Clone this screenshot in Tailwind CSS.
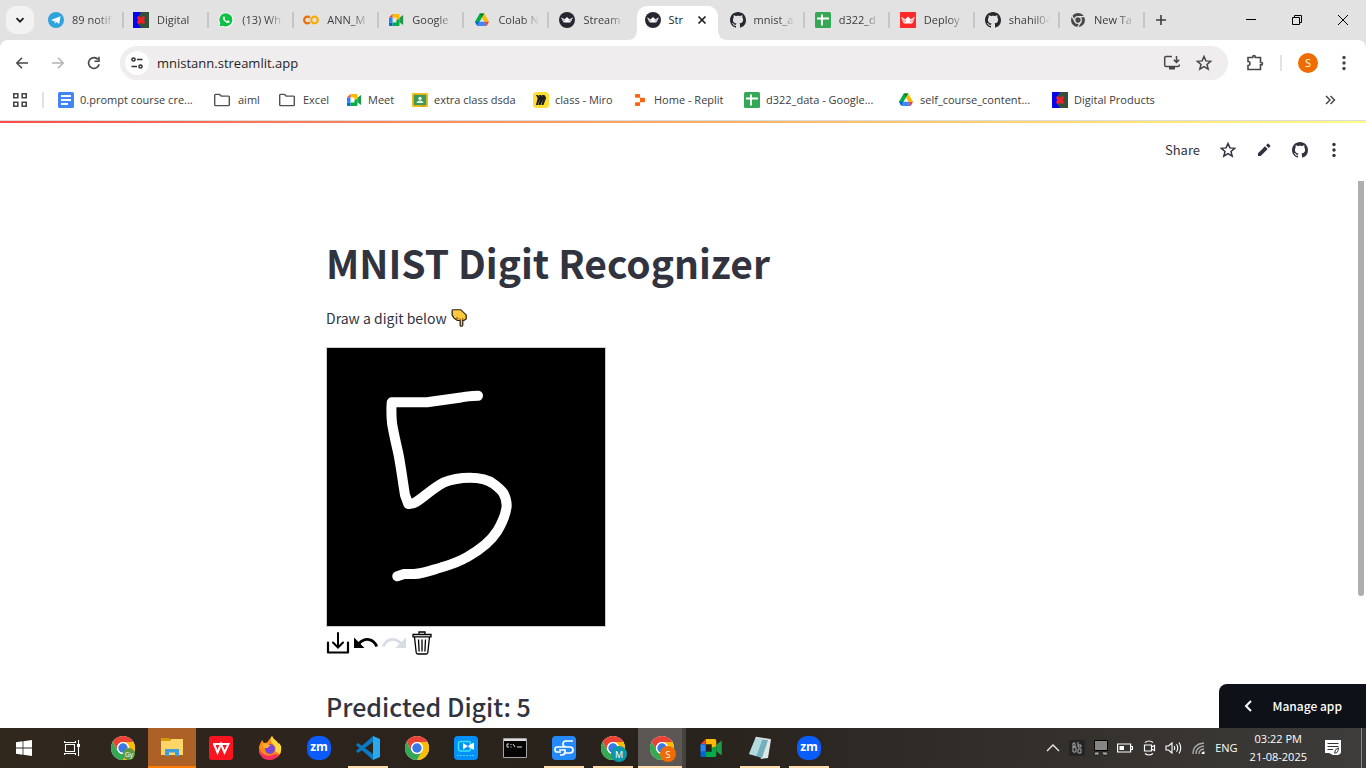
<!DOCTYPE html>
<html lang="en">
<head>
<meta charset="utf-8">
<title>MNIST Digit Recognizer</title>
<script src="https://cdn.jsdelivr.net/npm/@tailwindcss/browser@4"></script>
</head>
<body class="flex h-screen flex-col overflow-hidden bg-white font-['Open_Sans','Noto_Sans',sans-serif] text-[#3c3c3c]">

<!-- Shared icon shapes -->
<svg class="hidden" aria-hidden="true">
  <symbol id="telegram" viewBox="0 0 16 16"><circle cx="8" cy="8" r="8" fill="#2ea3dc"/><path d="M3 8 12.6 4.2 11.1 12 8.4 10.1 7 11.5 6.5 9.2z" fill="#fff"/><path d="M6.5 9.2 10.8 5.7 7.5 9.5 7 11.5z" fill="#b6dcf2"/></symbol>
  <symbol id="digital" viewBox="0 0 16 16"><path d="M0 0h16v16H0z" fill="#0505f0"/><path d="M8 0h8v16H8L5 12V5z" fill="#34503c"/><path d="M4 5l2-1 2 2 2-2 2 1-1 3 1 3-2 1-2-1-2 1-2-1 1-3z" fill="#ee2025"/></symbol>
  <symbol id="whatsapp" viewBox="0 0 16 16"><path d="M8 .5a7.5 7.5 0 0 0-6.5 11.2L.5 15.5l3.9-1A7.5 7.5 0 1 0 8 .5" fill="#fff"/><path d="M8 1.2a6.6 6.6 0 0 0-5.7 10L1.5 14.5l3.3-.8A6.6 6.6 0 1 0 8 1.2" fill="#0cc143"/><path d="M5.6 4.400c-1.400.8-1 2.600.7 4.600 1.900 2 4 2.700 5.200 1.300l.1-1.100-1.800-.9-.9.9c-1.200-.5-1.800-1.100-2.400-2.200l.6-.8-.7-1.700z" fill="#fff"/></symbol>
  <symbol id="colab" viewBox="0 0 16 16"><circle cx="11.5" cy="8" r="3.3" fill="none" stroke="#f9ab00" stroke-width="2.2"/><path d="M6.800 10.300a3.300 3.300 0 1 1 0-4.600" fill="none" stroke="#e8710a" stroke-width="2.2"/></symbol>
  <symbol id="meet" viewBox="0 0 16 16"><path d="M4.500 2H10.500a1 1 0 0 1 1 1v4L8.500 8V5.500h-4z" fill="#ffba00"/><path d="M4.500 2v3.500H1z" fill="#ea4335"/><path d="M1 5.500h3.500v5H1z" fill="#2684fc"/><path d="M1 10.500h3.500V14H2a1 1 0 0 1-1-1z" fill="#0066da"/><path d="M4.500 10.500h4V8l3-1v6a1 1 0 0 1-1 1h-6z" fill="#00ac47"/><path d="M11.500 5.800 14.600 3.300q.6-.3.600.4v8.600q0 .7-.6.400L11.500 10.200z" fill="#1f9a48"/></symbol>
  <symbol id="drive" viewBox="0 0 16 16"><path d="M5.700 1.500h4.600L8 5.500 3.300 13.600 1 9.700z" fill="#00ac47"/><path d="M5.700 1.500h4.600L8 5.500z" fill="#00832d"/><path d="M10.300 1.500 15 9.700h-4.600L8 5.500z" fill="#ffba00"/><path d="M1 9.700h4.600l-2.300 4.200z" fill="#0066da"/><path d="M5.600 9.700h4.800l2.300 4.200H3.300z" fill="#4285f4"/><path d="M10.400 9.700H15l-2.300 4.200z" fill="#ea4335"/></symbol>
  <symbol id="streamlit" viewBox="0 0 16 16"><circle cx="8" cy="8" r="8" fill="#262730"/><path d="M2.200 5.500 5.700 7.200 8 5 10.300 7.200 13.800 5.500 11.800 9.800q-.3.700-1 .7H5.200q-.7 0-1-.7z" fill="#fff"/><path d="M2.200 5.500 7 8.500 4.500 10zM13.800 5.500 9 8.500l2.500 1.500z" fill="#c4c4c8"/></symbol>
  <symbol id="crownred" viewBox="0 0 16 16"><path d="M0 0h16v16H0z" fill="#ff2b2b"/><path d="M1.200 5 5.300 7.200 8 4.500 10.700 7.200 14.800 5 12.600 10.800q-.3.700-1 .7H4.400q-.7 0-1-.7z" fill="#fff"/><path d="M1.200 5 7 9l-3 2zM14.800 5 9 9l3 2z" fill="#ffb6b6"/></symbol>
  <symbol id="github" viewBox="0 0 16 16"><path fill="currentColor" d="M8 0C3.580 0 0 3.580 0 8c0 3.540 2.290 6.530 5.470 7.590.4.070.55-.17.55-.38 0-.19-.01-.82-.01-1.490-2.010.37-2.530-.49-2.690-.94-.09-.23-.48-.94-.82-1.130-.28-.15-.68-.52-.01-.53.63-.01 1.080.58 1.230.82.72 1.210 1.870.87 2.330.66.07-.52.28-.87.51-1.070-1.780-.2-3.640-.89-3.640-3.950 0-.87.31-1.590.82-2.150-.08-.2-.36-1.020.08-2.120 0 0 .67-.21 2.200.82.64-.18 1.320-.27 2-.27s1.360.09 2 .27c1.530-1.040 2.200-.82 2.200-.82.44 1.100.16 1.920.08 2.120.51.56.82 1.270.82 2.150 0 3.070-1.870 3.750-3.650 3.950.29.25.54.73.54 1.480 0 1.070-.01 1.930-.01 2.200 0 .21.15.46.55.38A8.010 8.010 0 0 0 16 8c0-4.420-3.580-8-8-8"/></symbol>
  <symbol id="sheets" viewBox="0 0 16 16"><rect width="16" height="16" rx="1.5" fill="#34a853"/><path d="M6 2.500h2v3h6v2H8v6H6v-6H2v-2h4z" fill="#fff"/></symbol>
  <symbol id="docs" viewBox="0 0 16 16"><rect width="16" height="16" rx="1.5" fill="#4285f4"/><path d="M3 3h10v2H3zM3 7h10v2H3zM3 11h7v2H3z" fill="#fff"/></symbol>
  <symbol id="chromegray" viewBox="0 0 16 16"><circle cx="8" cy="8" r="7" fill="#484848"/><circle cx="8" cy="8" r="3.3" fill="#484848" stroke="#e2e2e2" stroke-width="1.3"/><path d="M8 4.700h6.500M5.100 9.600 1.900 4.200M10.900 9.600 7.700 15" stroke="#e2e2e2" stroke-width="1.3"/></symbol>
  <symbol id="folder" viewBox="0 0 16 16"><path d="M.7 3.200q0-.8.8-.8h4l1.700 1.700h7.300q.8 0 .8.800v7.900q0 .8-.8.800h-13q-.8 0-.8-.8z" fill="none" stroke="#505050" stroke-width="1.400"/></symbol>
  <symbol id="classroom" viewBox="0 0 16 16"><rect y="1" width="16" height="14" rx="1" fill="#f5bb18"/><path d="M1.800 2.800h12.400v10.400H1.800z" fill="#3c9a58"/><circle cx="8" cy="6.300" r="1.600" fill="#fff"/><path d="M4.500 11q.5-2.500 3.500-2.500t3.500 2.500z" fill="#e7f3ea"/><path d="M9 13.200h4V15H9z" fill="#e0a20c"/></symbol>
  <symbol id="miro" viewBox="0 0 16 16"><rect width="16" height="16" rx="3.500" fill="#ffdd33"/><path d="M3 3h2l1.500 2L6 3h2.300l1.200 2L9 3h2.400l1.800 2.700L10.500 13H8.300l2-5.700L7.500 13H5.300l1.900-6.300L4.700 13H2.900l1.800-6.700z" fill="#1c1c1e"/></symbol>
  <symbol id="replit" viewBox="0 0 16 16"><path d="M4 2h3q1 0 1 1v2.800H4q-1 0-1-1V3q0-1 1-1M8 5.800h4q1 0 1 1v2.400q0 1-1 1H8zM4 10.200h4V13q0 1-1 1H4q-1 0-1-1v-1.800q0-1 1-1" fill="#ff6210"/></symbol>
  <symbol id="dots" viewBox="0 0 16 16"><g fill="currentColor"><circle cx="8" cy="2.500" r="1.700"/><circle cx="8" cy="8" r="1.700"/><circle cx="8" cy="13.500" r="1.700"/></g></symbol>
  <symbol id="star" viewBox="0 0 16 16"><path d="M8 1.500 9.900 5.900l4.800.4-3.700 3.200 1.200 4.700L8 11.700l-4.200 2.500L5 9.500 1.300 6.300l4.800-.4z" fill="none" stroke="currentColor" stroke-width="1.500"/></symbol>
  <symbol id="chrome" viewBox="0 0 24 24"><circle cx="12" cy="12" r="12" fill="#fff"/><path d="M12 0a12 12 0 0 1 10.400 6H12a6 6 0 0 0-5.200 9L1.600 6A12 12 0 0 1 12 0" fill="#ea4335"/><path d="M22.400 6A12 12 0 0 1 12 24l5.200-9A6 6 0 0 0 12 6z" fill="#fbbc04"/><path d="M12 24A12 12 0 0 1 1.600 6l5.200 9a6 6 0 0 0 10.400 0z" fill="#34a853"/><circle cx="12" cy="12" r="6" fill="#fff"/><circle cx="12" cy="12" r="4.700" fill="#3b78e7"/></symbol>
  <symbol id="undo" viewBox="0 0 24 24"><path d="M0 6.500 10.500 17H0z" fill="currentColor"/><path d="M5 12.500C11 6 19.500 7.500 22.800 15.500" fill="none" stroke="currentColor" stroke-width="2.800"/></symbol>
</svg>

<header class="shrink-0 bg-[#e2e2e2]">
  <!-- Tab strip -->
  <div class="flex h-10 items-center">
    <div class="w-[39px] shrink-0 pl-1.5"><button aria-label="Search tabs" class="grid size-7 place-items-center rounded-[10px] bg-[#f3f2f2]"><svg class="size-3" viewBox="0 0 12 12"><path d="M2.500 4.200 6 7.700l3.500-3.500" fill="none" stroke="#1f1f1f" stroke-width="1.800"/></svg></button></div>
    <nav aria-label="Tabs" class="grid h-full min-w-0 flex-1 grid-cols-13 items-center text-[11px] leading-4">
      <a href="#" class="flex h-4 min-w-0 items-center gap-2 border-r-2 border-[#c6c6c6] pl-[9px] pr-2"><svg class="size-4 shrink-0"><use href="#telegram"/></svg><span class="min-w-0 flex-1 overflow-hidden whitespace-nowrap [mask-image:linear-gradient(to_right,black_60%,transparent)]">89 notif</span></a>
      <a href="#" class="flex h-4 min-w-0 items-center gap-2 border-r-2 border-[#c6c6c6] pl-[9px] pr-2"><svg class="size-4 shrink-0"><use href="#digital"/></svg><span class="min-w-0 flex-1 overflow-hidden whitespace-nowrap [mask-image:linear-gradient(to_right,black_80%,transparent)]">Digital</span></a>
      <a href="#" class="flex h-4 min-w-0 items-center gap-2 border-r-2 border-[#c6c6c6] pl-[9px] pr-2"><svg class="size-4 shrink-0"><use href="#whatsapp"/></svg><span class="min-w-0 flex-1 overflow-hidden whitespace-nowrap [mask-image:linear-gradient(to_right,black_60%,transparent)]">(13) Wh</span></a>
      <a href="#" class="flex h-4 min-w-0 items-center gap-2 border-r-2 border-[#c6c6c6] pl-[9px] pr-2"><svg class="size-4 shrink-0"><use href="#colab"/></svg><span class="min-w-0 flex-1 overflow-hidden whitespace-nowrap [mask-image:linear-gradient(to_right,black_60%,transparent)]">ANN_M</span></a>
      <a href="#" class="flex h-4 min-w-0 items-center gap-2 border-r-2 border-[#c6c6c6] pl-[9px] pr-2"><svg class="size-4 shrink-0"><use href="#meet"/></svg><span class="min-w-0 flex-1 overflow-hidden whitespace-nowrap [mask-image:linear-gradient(to_right,black_60%,transparent)]">Google</span></a>
      <a href="#" class="flex h-4 min-w-0 items-center gap-2 border-r-2 border-[#c6c6c6] pl-[10px] pr-2"><svg class="size-4 shrink-0"><use href="#drive"/></svg><span class="min-w-0 flex-1 overflow-hidden whitespace-nowrap [mask-image:linear-gradient(to_right,black_60%,transparent)]">Colab N</span></a>
      <a href="#" class="flex h-4 min-w-0 items-center gap-2 border-r-2 border-transparent pl-[10px] pr-2"><svg class="size-4 shrink-0"><use href="#streamlit"/></svg><span class="min-w-0 flex-1 overflow-hidden whitespace-nowrap [mask-image:linear-gradient(to_right,black_60%,transparent)]">Stream</span></a>
      <div class="relative flex h-full min-w-0 items-end px-[2px]">
        <svg class="absolute -left-2 bottom-0 h-2.5 w-2.5" viewBox="0 0 10 10"><path d="M10 0v10H0Q10 10 10 0" fill="#fff"/></svg>
        <div class="flex h-[34px] min-w-0 flex-1 items-center gap-2 rounded-t-[10px] bg-white pb-1.5 pl-2 pr-2.5 text-[#1f1f1f]"><svg class="size-4 shrink-0"><use href="#streamlit"/></svg><a href="#" class="whitespace-nowrap">Str</a><button aria-label="Close tab" class="ml-auto"><svg class="size-3" viewBox="0 0 12 12"><path d="m2.500 2.500 7 7m0-7-7 7" stroke="#1f1f1f" stroke-width="1.700"/></svg></button></div>
        <svg class="absolute -right-2 bottom-0 h-2.5 w-2.5" viewBox="0 0 10 10"><path d="M0 0v10h10Q0 10 0 0" fill="#fff"/></svg>
      </div>
      <a href="#" class="flex h-4 min-w-0 items-center gap-2 border-r-2 border-[#c6c6c6] pl-[10px] pr-2"><svg class="size-4 shrink-0 text-[#24292f]"><use href="#github"/></svg><span class="min-w-0 flex-1 overflow-hidden whitespace-nowrap [mask-image:linear-gradient(to_right,black_60%,transparent)]">mnist_a</span></a>
      <a href="#" class="flex h-4 min-w-0 items-center gap-2 border-r-2 border-[#c6c6c6] pl-[10px] pr-2"><svg class="size-4 shrink-0"><use href="#sheets"/></svg><span class="min-w-0 flex-1 overflow-hidden whitespace-nowrap [mask-image:linear-gradient(to_right,black_60%,transparent)]">d322_d</span></a>
      <a href="#" class="flex h-4 min-w-0 items-center gap-2 border-r-2 border-[#c6c6c6] pl-[10px] pr-2"><svg class="size-4 shrink-0"><use href="#crownred"/></svg><span class="min-w-0 flex-1 overflow-hidden whitespace-nowrap [mask-image:linear-gradient(to_right,black_60%,transparent)]">Deploy</span></a>
      <a href="#" class="flex h-4 min-w-0 items-center gap-2 border-r-2 border-[#c6c6c6] pl-[10px] pr-2"><svg class="size-4 shrink-0 text-[#24292f]"><use href="#github"/></svg><span class="min-w-0 flex-1 overflow-hidden whitespace-nowrap [mask-image:linear-gradient(to_right,black_60%,transparent)]">shahil04</span></a>
      <a href="#" class="flex h-4 min-w-0 items-center gap-2 border-r-2 border-[#c6c6c6] pl-[10px] pr-2"><svg class="size-4 shrink-0"><use href="#chromegray"/></svg><span class="min-w-0 flex-1 overflow-hidden whitespace-nowrap [mask-image:linear-gradient(to_right,black_60%,transparent)]">New Ta</span></a>
    </nav>
    <div class="w-[83px] shrink-0 pl-2"><button aria-label="New tab" class="grid size-4 place-items-center"><svg class="size-3" viewBox="0 0 12 12"><path d="M6 1v10M1 6h10" stroke="#3c3c3c" stroke-width="1.600"/></svg></button></div>
    <div class="flex h-full shrink-0">
      <button aria-label="Minimize" class="grid w-[46px] place-items-center"><svg class="size-3" viewBox="0 0 12 12"><path d="M1 5.500h10" stroke="#000"/></svg></button>
      <button aria-label="Restore" class="grid w-[46px] place-items-center"><svg class="size-3" viewBox="0 0 12 12"><path d="M1.500 3.500h7v7h-7zM3.500 3.500v-2h7v7h-2" fill="none" stroke="#000"/></svg></button>
      <button aria-label="Close" class="grid w-[46px] place-items-center"><svg class="size-3" viewBox="0 0 12 12"><path d="m1 1 10 10M11 1 1 11" stroke="#000"/></svg></button>
    </div>
  </div>

  <!-- Address bar -->
  <div class="flex h-[46px] items-center rounded-t-lg bg-white text-[#474747]">
    <div class="flex w-[120px] shrink-0 items-center gap-5 pl-3.5">
      <button aria-label="Back"><svg class="size-4" viewBox="0 0 16 16"><path d="M14 8H3M8 2.800 2.800 8 8 13.200" fill="none" stroke="currentColor" stroke-width="1.500"/></svg></button>
      <button aria-label="Forward" class="text-[#b4b4b4]"><svg class="size-4" viewBox="0 0 16 16"><path d="M2 8h11M8 2.800 13.200 8 8 13.200" fill="none" stroke="currentColor" stroke-width="1.500"/></svg></button>
      <button aria-label="Reload"><svg class="size-4" viewBox="0 0 16 16"><path d="M13.200 9.300A5.400 5.400 0 1 1 12 4.400M13 1.800v4.500H8.500" fill="none" stroke="currentColor" stroke-width="1.600"/></svg></button>
    </div>
    <div class="flex h-[34px] min-w-0 flex-1 items-center rounded-full bg-[#efedee] pl-[5px] pr-4">
      <button aria-label="Site information" class="grid size-6 shrink-0 place-items-center rounded-full bg-white"><svg class="size-4" viewBox="0 0 16 16"><g fill="none" stroke="#303030" stroke-width="1.500"><circle cx="4.500" cy="4.500" r="1.600"/><circle cx="11.500" cy="11.500" r="1.600"/><path d="M8 4.500h5.500M2.500 11.500H8"/></g></svg></button>
      <input aria-label="Address" value="mnistann.streamlit.app" class="ml-2 min-w-0 flex-1 bg-transparent pt-0.5 text-[13px] text-[#1f1f1f] outline-none">
      <button aria-label="Install app"><svg class="h-4 w-[18px]" viewBox="0 0 18 16"><path d="M9 1.500H3q-1.300 0-1.300 1.300v7.400q0 1.300 1.300 1.300h12q1.300 0 1.300-1.300V9.500M13.500 1v6M10.800 4.700l2.700 2.700 2.700-2.700" fill="none" stroke="currentColor" stroke-width="1.500"/><path d="M6 11.500h6v3H6z" fill="currentColor"/></svg></button>
      <button aria-label="Bookmark this tab" class="ml-[15px]"><svg class="size-4"><use href="#star"/></svg></button>
    </div>
    <div class="flex w-[138px] shrink-0 items-center pl-[18px]">
      <button aria-label="Extensions"><svg class="size-[18px]" viewBox="0 0 18 18"><path d="M2 3.500h4.800v-.700a1.200 1.200 0 0 1 2.400 0v.700H14.500V8.500h.8a1.200 1.200 0 0 1 0 2.400h-.8V15.500H2v-4a2 2 0 0 0 0-4z" fill="none" stroke="currentColor" stroke-width="1.600"/></svg></button>
      <span class="ml-4 h-4 w-0.5 bg-[#e3e3e3]"></span>
      <button aria-label="Profile" class="ml-4 grid size-5 place-items-center rounded-full bg-[#ef6c00] text-[11px] text-white">S</button>
      <button aria-label="Browser menu" class="ml-[18px]"><svg class="size-4"><use href="#dots"/></svg></button>
    </div>
  </div>

  <!-- Bookmarks -->
  <div class="flex h-[35px] items-center border-b border-[#dcdcdc] bg-white pb-1.5 text-[11px] text-[#3c3c3c]">
    <div class="flex w-[58px] shrink-0 items-center pl-3"><button aria-label="Apps"><svg class="size-4" viewBox="0 0 16 16"><path d="M1.800 1.800h4v4h-4zM10.200 1.800h4v4h-4zM1.800 10.200h4v4h-4zM10.200 10.200h4v4h-4z" fill="none" stroke="#474747" stroke-width="1.600"/></svg></button><span class="ml-3.5 h-4 w-0.5 bg-[#e3e3e3]"></span></div>
    <nav aria-label="Bookmarks" class="flex min-w-0 flex-1 items-center overflow-hidden whitespace-nowrap">
      <a href="#" class="flex w-[156px] shrink-0 items-center gap-1.5"><svg class="size-4 shrink-0"><use href="#docs"/></svg>0.prompt course cre...</a>
      <a href="#" class="flex w-[65px] shrink-0 items-center gap-2"><svg class="size-4 shrink-0"><use href="#folder"/></svg>aiml</a>
      <a href="#" class="flex w-[67px] shrink-0 items-center gap-2"><svg class="size-4 shrink-0"><use href="#folder"/></svg>Excel</a>
      <a href="#" class="flex w-[66px] shrink-0 items-center gap-1.5"><svg class="size-4 shrink-0"><use href="#meet"/></svg>Meet</a>
      <a href="#" class="flex w-[121px] shrink-0 items-center gap-1.5"><svg class="size-4 shrink-0"><use href="#classroom"/></svg>extra class dsda</a>
      <a href="#" class="flex w-[99px] shrink-0 items-center gap-1.5"><svg class="size-4 shrink-0"><use href="#miro"/></svg>class - Miro</a>
      <a href="#" class="flex w-[112px] shrink-0 items-center gap-1.5"><svg class="size-4 shrink-0"><use href="#replit"/></svg>Home - Replit</a>
      <a href="#" class="flex w-[154px] shrink-0 items-center gap-1.5"><svg class="size-4 shrink-0"><use href="#sheets"/></svg>d322_data - Google...</a>
      <a href="#" class="flex w-[154px] shrink-0 items-center gap-1.5"><svg class="size-4 shrink-0"><use href="#drive"/></svg>self_course_content...</a>
      <a href="#" class="flex shrink-0 items-center gap-1.5"><svg class="size-4 shrink-0"><use href="#digital"/></svg>Digital Products</a>
    </nav>
    <button aria-label="More bookmarks" class="mr-[30px]"><svg class="size-3" viewBox="0 0 12 12"><path d="m2 2 4 4-4 4M6.500 2l4 4-4 4" fill="none" stroke="#474747" stroke-width="1.500"/></svg></button>
  </div>
</header>

<!-- Streamlit page -->
<main class="relative min-h-0 flex-1 overflow-hidden bg-white font-['Noto_Sans_CJK_SC',sans-serif] text-[#31333f]">
  <div class="h-0.5 bg-linear-to-r from-[#ff4b4b] to-[#fffd80]"></div>
  <div class="flex h-[58px] items-center justify-end gap-5 pb-1 pr-6 text-[13px]">
    <button>Share</button>
    <button aria-label="Favourite"><svg class="size-4"><use href="#star"/></svg></button>
    <button aria-label="Edit"><svg class="size-4" viewBox="0 0 16 16"><path d="M2 11.300V14h2.700l7-7L9 4.300zM10 3.300 12.700 6l1.500-1.500q.5-.5 0-1L12.500 1.800q-.5-.5-1 0z" fill="currentColor"/></svg></button>
    <button aria-label="View on GitHub"><svg class="size-4"><use href="#github"/></svg></button>
    <button aria-label="App menu" class="-ml-0.5"><svg class="size-4"><use href="#dots"/></svg></button>
  </div>
  <div class="pr-2.5">
    <div class="mx-auto w-full max-w-[704px] pt-[55px]">
      <h1 class="text-[39px] font-bold leading-[52px]">MNIST Digit Recognizer</h1>
      <p class="mt-[18px] flex items-center text-[14px] leading-6">Draw a digit below
        <svg role="img" aria-label="pointing down" class="ml-1 h-[18px] w-4" viewBox="0 0 14 18" preserveAspectRatio="none"><path d="M1 1.500Q1 .7 2 .7h6.500L13.300 6v3.500q0 1-1 1-.8 1.500-2 .8V16q0 1.300-1.200 1.300T8 16v-4.500H5.500L2.500 9 1 6z" fill="#ffc83d" stroke="#2a2118" stroke-width="1.100"/><path d="M4.500 8.500l2 1.500M8 11.300V9.500M10.300 11V9" fill="none" stroke="#8a5a10"/></svg>
      </p>
      <svg role="img" aria-label="Drawing canvas" class="mt-[17px] size-[280px] border border-[#ccc] bg-black" viewBox="1 1 278 278"><path d="M152 48.700Q141 49 135 50.500L101 55.300H65.700Q65 66 66 76C67.500 86 70 96 72.300 106.300C75 120 77 136 79 148L82.300 157Q86 157.500 90 155C98 150 107 141 117.300 135.700C126 132 134 130.700 144 130.700C153 130.700 161 132 167 136.500Q174 141.500 177.300 146Q180.700 152 180.700 158.700C180 168 176 176 171.300 184C165 194 152 204 140.700 210.300C131 216 123 218 115 220.500C106 223 98 226.500 88 227H78L71.300 229.300" fill="none" stroke="#fff" stroke-width="10" stroke-linecap="round" stroke-linejoin="round"/></svg>
      <div class="flex h-[30px] items-center gap-1 pt-0.5 text-black">
        <button aria-label="Send to Streamlit"><svg class="size-6" viewBox="0 0 24 24"><path d="M2 11.500V21.500H22V11.500" fill="none" stroke="currentColor" stroke-width="2.200" stroke-linejoin="round" stroke-linecap="round"/><path d="M12 2v14M7 11.500 12 16.500 17 11.500" fill="none" stroke="currentColor" stroke-width="2" stroke-linecap="round"/></svg></button>
        <button aria-label="Undo"><svg class="size-6"><use href="#undo"/></svg></button>
        <button aria-label="Redo" disabled class="text-[#d8dce6]"><svg class="size-6 -scale-x-100"><use href="#undo"/></svg></button>
        <button aria-label="Clear canvas"><svg class="size-6" viewBox="0 0 24 24"><g fill="none" stroke="currentColor" stroke-width="1.300"><path d="M3 3.500h18v2.300H3zM9 3.300V1h6v2.300M4.500 6l1.700 15.500q.2 1.500 1.500 1.500h8.600q1.300 0 1.500-1.500L19.500 6M8.500 8.500l.6 12M12 8.500v12M15.500 8.500l-.6 12"/></g></svg></button>
      </div>
      <h3 class="mt-[33px] text-[25px] font-medium leading-8">Predicted Digit: 5</h3>
    </div>
  </div>
  <div aria-hidden="true" class="absolute right-0.5 top-[60px] h-[415px] w-1.5 rounded-b-sm bg-[#adadb2]"></div>
  <button class="absolute bottom-0 right-0 flex h-11 items-center gap-[18px] rounded-tl-lg bg-[#0e1117] px-6 text-[12px] font-medium text-white"><svg class="size-3" viewBox="0 0 12 12"><path d="M8 1 3 6l5 5" fill="none" stroke="#fff" stroke-width="2"/></svg>Manage app</button>
</main>

<!-- Windows taskbar -->
<footer class="flex h-10 shrink-0 items-center justify-between bg-linear-to-r from-[#30271d] via-[#28221c] to-[#3d3c3a] text-white">
  <nav aria-label="Taskbar" class="flex h-full gap-px">
    <button aria-label="Start" class="grid w-12 place-items-center"><svg class="size-4" viewBox="0 0 16 16"><path d="M0 2.200 6.600 1.300v6.300H0zM7.400 1.200 16 0v7.600H7.400zM0 8.400h6.600v6.300L0 13.800zM7.400 8.400H16V16l-8.600-1.200z" fill="#fff"/></svg></button>
    <button aria-label="Task view" class="grid w-[46px] place-items-center"><svg class="size-4" viewBox="0 0 16 16"><path d="M1.500 4.500h9v7h-9zM.5 1v1.500h11V1M.5 15v-1.500h11V15M14.500 0v16" fill="none" stroke="#fff" stroke-width="1.100"/><path d="M13 4h3v3h-3z" fill="#fff"/></svg></button>
    <button aria-label="Chrome, Gy" class="relative ml-[3px] grid w-12 place-items-center"><svg class="size-6"><use href="#chrome"/></svg><span class="absolute bottom-2 right-3 grid size-3 place-items-center rounded-full bg-[#5c9a3c] text-[7px] leading-none">Gy</span></button>
    <button aria-label="File Explorer" class="grid w-12 place-items-center border-b-2 border-[#ff7a00] bg-[#ac6127]"><svg class="h-5 w-[22px]" viewBox="0 0 22 20"><path d="M0 1h8l2 2h-1v3H0z" fill="#d99a05"/><path d="M0 4h9l1-2h12v16H0z" fill="#ffd667"/><path d="M4 19v-7h14v7h-4v-3.500H8V19z" fill="#3f9fdc"/></svg></button>
    <button aria-label="WPS Office" class="grid w-12 place-items-center"><svg class="size-6" viewBox="0 0 24 24"><rect width="24" height="24" rx="3" fill="#fa1420"/><path d="M4 8h8.500M5 8l3.500 8.500L12 8l3.500 8.500L19.500 8H14l-2.500 0" fill="none" stroke="#fff" stroke-width="2"/></svg></button>
    <button aria-label="Firefox" class="grid w-12 place-items-center"><svg class="size-6" viewBox="0 0 24 24"><path d="M2 8 4 4l2 3 3-.5L14 0q2 4 5 5.500Q23.500 10 23 14A11 9.500 0 0 1 1 14Q.5 11 2 8" fill="#ff8a16"/><path d="M14 0q-3 4 1 8t2 7l5 3q3-7-1-11l-1 1q-1-3-3-4t-3-4" fill="#ffdc3e"/><path d="M1 11q1 6 6 8t10-1l4 1Q17 24 12 24 2 24 1 14z" fill="#f5305e"/><circle cx="12" cy="13" r="5" fill="#7846d8"/><path d="M4 8q5-2 9 2-3 0-3 2H6z" fill="#ffad28"/></svg></button>
    <button aria-label="Zoom" class="grid w-12 place-items-center"><span class="grid size-6 place-items-center rounded-[10px] bg-[#0b5cff] pb-0.5 text-[12px] font-bold leading-none">zm</span></button>
    <button aria-label="Visual Studio Code" class="relative grid w-12 place-items-center"><svg class="size-6" viewBox="0 0 24 24"><path d="M17 0 24 3v18l-7 3z" fill="#29a9f2"/><path d="M17 24 0 9l2-2 15 11zM17 0v6L2 17l-2-2z" fill="#0a7ac4"/></svg><span class="absolute inset-x-1 bottom-0 h-0.5 bg-[#fddcab]"></span></button>
    <button aria-label="Chrome" class="grid w-12 place-items-center"><svg class="size-6"><use href="#chrome"/></svg></button>
    <button aria-label="Screen recorder" class="grid w-12 place-items-center"><svg class="size-6" viewBox="0 0 24 24"><rect width="24" height="24" rx="4" fill="#0590fa"/><rect x="4.500" y="5.500" width="12" height="9.500" rx="2" fill="none" stroke="#39e4ec" stroke-width="1.500"/><path d="m9 7 5 3.200L9 13.500zM14.500 9.500 20 6.500v7.500l-5.500-3z" fill="#fff"/><path d="M3 19.500h18" stroke="#37d8ef" stroke-dasharray="2 1"/></svg></button>
    <button aria-label="Command Prompt" class="grid w-12 place-items-center"><svg class="h-5 w-6" viewBox="0 0 24 20"><path d="M.5.500h23v19H.5z" fill="#050505" stroke="#a5a5a5"/><path d="M1 1h22v2H1z" fill="#ddd"/><path d="M6 6H4v3h2M8 6v1M8 8.500v1M10 6l2 3M14 9h5" fill="none" stroke="#ddd"/></svg></button>
    <button aria-label="Screen share" class="relative grid w-12 place-items-center"><svg class="size-6" viewBox="0 0 24 24"><rect width="24" height="24" rx="4" fill="#2489fa"/><path d="M21 5h-7q-3 0-3 3t3 3h4q3 0 3 3t-3 3h-6M14 11H5q-2 0-2 2.500T5 16h4M8 19h2q3 0 3-3v-2H7" fill="none" stroke="#fff" stroke-width="1.700"/></svg><span class="absolute inset-x-1 bottom-0 h-0.5 bg-[#fddcab]"></span></button>
    <button aria-label="Chrome, M" class="relative grid w-12 place-items-center"><svg class="size-6"><use href="#chrome"/></svg><span class="absolute bottom-1.5 right-2.5 grid size-4 place-items-center rounded-full bg-[#0b97a9] text-[9px] leading-none">M</span><span class="absolute inset-x-1 bottom-0 h-0.5 bg-[#fddcab]"></span></button>
    <button aria-label="Chrome, S" class="relative grid w-12 place-items-center border-r-4 border-[#454340] bg-[#5a5754]"><svg class="ml-1 size-6"><use href="#chrome"/></svg><span class="absolute bottom-1.5 right-1.5 grid size-4 place-items-center rounded-full bg-[#f06c00] text-[9px] leading-none">S</span><span class="absolute inset-x-0 bottom-0 h-0.5 bg-[#fddcab]"></span></button>
    <button aria-label="Google Meet" class="grid w-12 place-items-center"><svg class="size-6"><use href="#meet"/></svg></button>
    <button aria-label="Notepad" class="relative grid w-12 place-items-center"><svg class="size-6" viewBox="0 0 24 24"><path d="M8 1.500 23 3.500 20 22 13 23z" fill="#dfe6e6"/><path d="M7.500 2 20 4 14 22 1 18z" fill="#73b0bc"/><path d="m7.500 2 7 1-6 17L1 18z" fill="#b3dade"/><path d="m7.500 1.500 15 2.200" stroke="#ddd" stroke-width="1.500"/></svg><span class="absolute inset-x-1 bottom-0 h-0.5 bg-[#fddcab]"></span></button>
    <button aria-label="Zoom meeting" class="relative grid w-12 place-items-center"><span class="grid size-6 place-items-center rounded-[10px] bg-[#0b5cff] pb-0.5 text-[12px] font-bold leading-none">zm</span><span class="absolute inset-x-1 bottom-0 h-0.5 bg-[#fddcab]"></span></button>
  </nav>
  <div class="flex h-full items-center gap-2 pr-1 text-[11px] leading-[18px]">
    <button aria-label="Show hidden icons"><svg class="size-4" viewBox="0 0 16 16"><path d="m2 11 6-6 6 6" fill="none" stroke="#eee" stroke-width="1.300"/></svg></button>
    <svg class="size-4" viewBox="0 0 16 16"><path d="M0 0h16v16H0z" fill="#242424"/><path d="M4 3v9M4 3h2v4H4M4 7h3v5H4M9 2v5h3V5H9M9 9h3v4H9z" fill="none" stroke="#aaa"/></svg>
    <svg class="size-4" viewBox="0 0 16 16"><path d="M1.500.500h13v10h-13z" fill="#858585" stroke="#050505"/><path d="M2 12h4v3H1zM9 12h5l1 3h-5z" fill="#aaa" stroke="#111" stroke-width=".7"/></svg>
    <svg class="size-4" viewBox="0 0 16 16"><path d="M.6 4h13v8H.6zM14 6.500h1.500v3H14" fill="none" stroke="#fff" stroke-width="1.200"/><path d="M2.500 6h4.500v4H2.500z" fill="#fff"/></svg>
    <svg class="size-4" viewBox="0 0 16 16"><path d="M3.500 5h7v6h-7zM10.500 7l3-1.500v5l-3-1.500M4 2.500q4-3 8 0M4 13.500q4 3 8 0" fill="none" stroke="#fff" stroke-width="1.200"/></svg>
    <svg class="h-4 w-[18px]" viewBox="0 0 18 16"><path d="M1 6h2.500L7 3v10L3.500 10H1zM9 6q1.500 2 0 4M11.500 4.300q2.500 3.700 0 7.400M14 2.500q3.500 5.500 0 11" fill="none" stroke="#fff" stroke-width="1.100"/></svg>
    <svg class="size-4" viewBox="0 0 16 16"><g fill="none" stroke="#aaa" stroke-width="1.300"><path d="M2 14Q2 4 13 3"/><path d="M5 14q0-7 8-8"/><path d="M8 14q0-4.500 5-5"/></g><path d="M10.500 14a2.500 2.500 0 0 1 3-2.500V14z" fill="#fff"/></svg>
    <span>ENG</span>
    <time class="ml-1 text-center">03:22 PM<br>21-08-2025</time>
    <button aria-label="Notifications" class="ml-2.5 mr-3"><svg class="size-4" viewBox="0 0 16 16"><path d="M0 0h16v9.500a4 4 0 0 1-3 5.500H8l-4-2H0z" fill="#fff"/><path d="M2.500 3.500h11M2.500 6.500h11M2.500 9.500H8" stroke="#333" stroke-width="1.200"/><path d="M13.500 8q-4 1-4 5 3.500 1 4-5" fill="#fff" stroke="#333"/></svg></button>
    <span class="h-full w-px bg-[#8a8a88]"></span>
  </div>
</footer>
</body>
</html>
